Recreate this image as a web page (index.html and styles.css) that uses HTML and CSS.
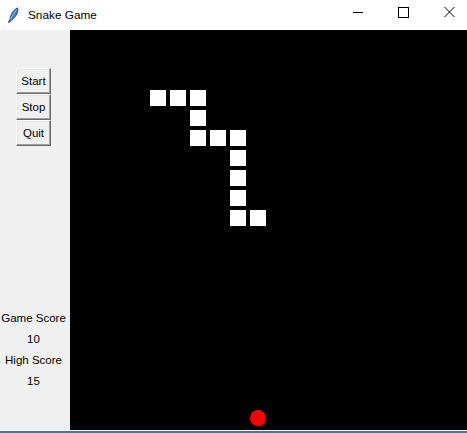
FILE: index.html
```html
<!DOCTYPE html>
<html>
<head>
<meta charset="utf-8">
<title>Snake Game</title>
<link rel="stylesheet" href="styles.css">
</head>
<body>
<div class="window">
  <div class="titlebar">
    <svg class="app-icon" width="12" height="16" viewBox="0 0 12 16">
      <path d="M1.5 15.5 L3 12 C3.5 8 6 3.5 10.5 0.8 C11.5 4 10 9 5 12.5 L2.3 15.5 Z" fill="#3d7fd6" stroke="#123a78" stroke-width="0.9"/>
      <path d="M3 12.5 L9.5 2.5" stroke="#a8cdf5" stroke-width="0.8"/>
    </svg>
    <span class="title">Snake Game</span>
    <div class="controls">
      <svg class="ctl" width="46" height="30" viewBox="0 0 46 30"><path d="M24 12.5 H34" stroke="#000" stroke-width="1"/></svg>
      <svg class="ctl" width="46" height="30" viewBox="0 0 46 30"><rect x="23.5" y="7.5" width="10" height="10" fill="none" stroke="#000" stroke-width="1"/></svg>
      <svg class="ctl" width="46" height="30" viewBox="0 0 46 30"><path d="M23.5 7 L33.5 17 M33.5 7 L23.5 17" stroke="#000" stroke-width="1"/></svg>
    </div>
  </div>
  <div class="content">
    <div class="sidebar">
      <div class="buttons">
        <button class="btn">Start</button>
        <button class="btn">Stop</button>
        <button class="btn">Quit</button>
      </div>
      <div class="scores">
        <div class="line">Game Score</div>
        <div class="line">10</div>
        <div class="line">High Score</div>
        <div class="line">15</div>
      </div>
    </div>
    <svg class="board" width="397" height="400" viewBox="0 0 397 400">
      <rect x="0" y="0" width="397" height="400" fill="#000"/>
      <g fill="#fff">
        <rect x="80" y="60" width="16" height="16"/>
        <rect x="100" y="60" width="16" height="16"/>
        <rect x="120" y="60" width="16" height="16"/>
        <rect x="120" y="80" width="16" height="16"/>
        <rect x="120" y="100" width="16" height="16"/>
        <rect x="140" y="100" width="16" height="16"/>
        <rect x="160" y="100" width="16" height="16"/>
        <rect x="160" y="120" width="16" height="16"/>
        <rect x="160" y="140" width="16" height="16"/>
        <rect x="160" y="160" width="16" height="16"/>
        <rect x="160" y="180" width="16" height="16"/>
        <rect x="180" y="180" width="16" height="16"/>
      </g>
      <circle cx="188" cy="388" r="8" fill="#ff0000"/>
    </svg>
  </div>
  <div class="bottom-edge"></div>
</div>
</body>
</html>
```

FILE: styles.css
```css
* { box-sizing: border-box; }
html, body {
  margin: 0;
  padding: 0;
  background: #f0f0f0;
  font-family: "Liberation Sans", Arial, sans-serif;
  overflow: hidden;
}
.window {
  width: 467px;
  height: 433px;
  display: flex;
  flex-direction: column;
}
.titlebar {
  height: 30px;
  background: #fff;
  display: flex;
  align-items: center;
  flex: none;
}
.app-icon {
  margin-left: 7px;
  margin-top: -1px;
}
.title {
  margin-left: 9px;
  font-size: 11.8px;
  color: #000;
}
.controls {
  margin-left: auto;
  display: flex;
}
.ctl { display: block; }
.content {
  display: flex;
  height: 400px;
  flex: none;
}
.sidebar {
  width: 70px;
  flex: none;
  display: flex;
  flex-direction: column;
  align-items: center;
  padding-top: 38px;
  padding-right: 3px;
}
.buttons {
  display: flex;
  flex-direction: column;
  gap: 0;
}
.btn {
  width: 35px;
  height: 26px;
  margin: 0;
  padding: 0;
  font-family: "Liberation Sans", Arial, sans-serif;
  font-size: 11.5px;
  color: #000;
  background: #f0f0f0;
  border: 1px solid;
  border-color: #fff #696969 #696969 #fff;
  box-shadow: inset -1px -1px 0 #a0a0a0, inset 1px 1px 0 #e3e3e3;
}
.scores {
  margin-top: 162px;
  display: flex;
  flex-direction: column;
  align-items: center;
}
.line {
  height: 21px;
  line-height: 21px;
  font-size: 11.5px;
  color: #000;
}
.board {
  display: block;
  flex: none;
}
.bottom-edge {
  height: 3px;
  background: #f0f0f0;
  border-bottom: 2px solid #1883d7;
}
```
